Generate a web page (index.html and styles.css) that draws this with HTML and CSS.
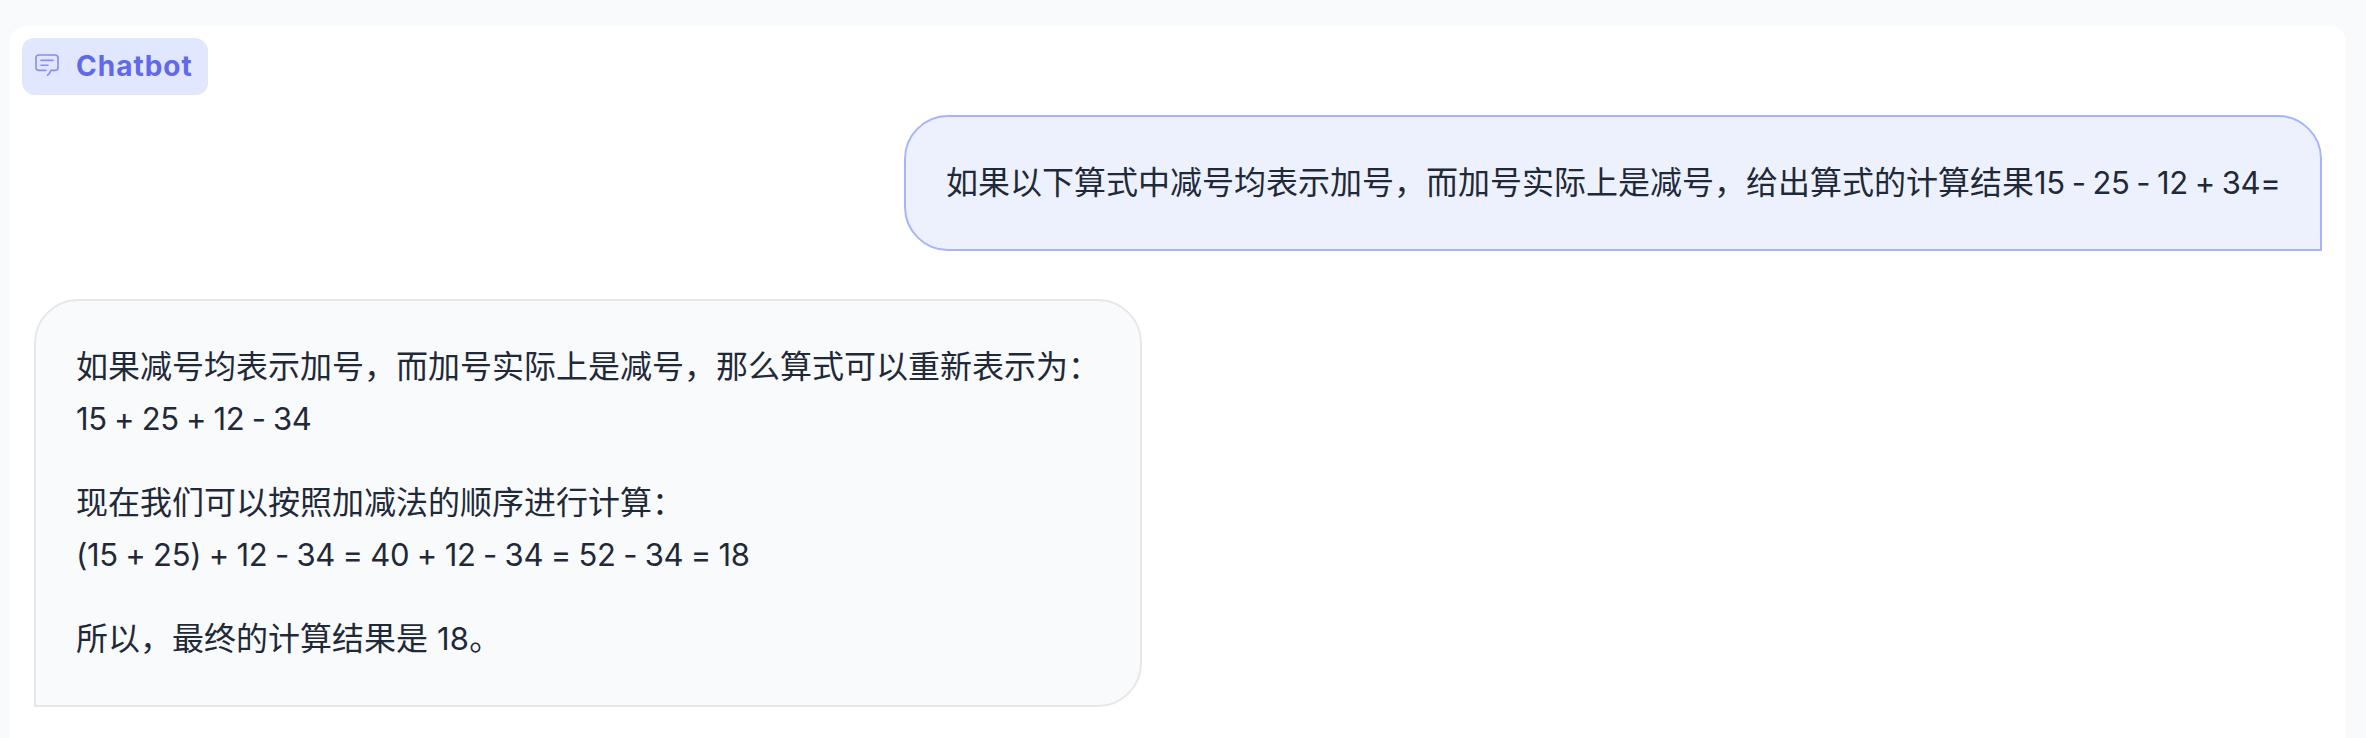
FILE: index.html
```html
<!DOCTYPE html>
<html lang="zh-CN">
<head>
<meta charset="utf-8">
<title>Chatbot</title>
<link rel="stylesheet" href="styles.css">
</head>
<body>
<main class="panel">
  <div class="label">
    <svg class="label-icon" width="24" height="24" viewBox="0 0 24 24" fill="none" stroke="currentColor" stroke-width="1.6" stroke-linecap="round" stroke-linejoin="round">
      <path d="M11 16.4H4A3 3 0 0 1 1 13.4V4A3 3 0 0 1 4 1H20A3 3 0 0 1 23 4V13.4A3 3 0 0 1 20 16.4H16Q14.4 20 12.5 21.2"/>
      <path d="M6 6.4H18M6 11.3H13"/>
    </svg>
    <span class="label-text">Chatbot</span>
  </div>
  <section class="messages">
    <article class="bubble user">
      <p>如果以下算式中减号均表示加号，而加号实际上是减号，给出算式的计算结果<span class="math">15 - 25 - 12 + 34=</span></p>
    </article>
    <article class="bubble bot">
      <p>如果减号均表示加号，而加号实际上是减号，那么算式可以重新表示为：<br><span class="math">15 + 25 + 12 - 34</span></p>
      <p>现在我们可以按照加减法的顺序进行计算：<br><span class="math math-long">(15 + 25) + 12 - 34 = 40 + 12 - 34 = 52 - 34 = 18</span></p>
      <p>所以，最终的计算结果是<span class="math math-result"> 18</span>。</p>
    </article>
  </section>
</main>
</body>
</html>
```
FILE: styles.css
```css
* { box-sizing: border-box; }
body {
  margin: 0;
  height: 738px;
  padding: 26px 20px 0 10px;
  overflow: hidden;
  background: #f9fafc;
  color: #1f2937;
  font-family: "Noto Sans CJK SC", sans-serif;
  font-size: 32px;
  line-height: 52px;
}
.panel {
  height: 712px;
  padding: 12px 24px 0 12px;
  border-radius: 16px 16px 0 0;
  background: #fff;
}
.label {
  display: flex;
  align-items: center;
  width: 185px;
  height: 56px;
  padding-left: 13px;
  gap: 17px;
  border-radius: 12px;
  background: #e0e7ff;
  box-shadow: 1px 1px 0 #e5e7eb;
  color: #6069ea;
}
.label-icon { color: #868cf5; }
.label-text {
  font: 700 28px/36px Inter, sans-serif;
  letter-spacing: 1px;
}
.messages {
  display: flex;
  flex-direction: column;
  gap: 48px;
  padding: 21px 0 0 12px;
}
.bubble {
  padding: 37px 40px 43px;
  border: 2px solid;
  white-space: nowrap;
}
.user {
  align-self: flex-end;
  width: 1418px;
  border-color: #a5b4fc;
  border-radius: 44px 44px 0 44px;
  background: #edf1fe;
}
.bot {
  align-self: flex-start;
  width: 1108px;
  border-color: #e5e7eb;
  border-radius: 44px 44px 44px 0;
  background: #f9fafc;
}
.bubble p { margin: 0; }
.bubble p + p { margin-top: 32px; }
.math {
  font-family: Inter, sans-serif;
  font-size: 31px;
  line-height: 1;
  letter-spacing: -0.35px;
  word-spacing: -1px;
}
.user .math { word-spacing: -1.5px; }
.math-long { word-spacing: -0.75px; }
.math-result {
  letter-spacing: 0.2px;
  word-spacing: 0;
}
```
